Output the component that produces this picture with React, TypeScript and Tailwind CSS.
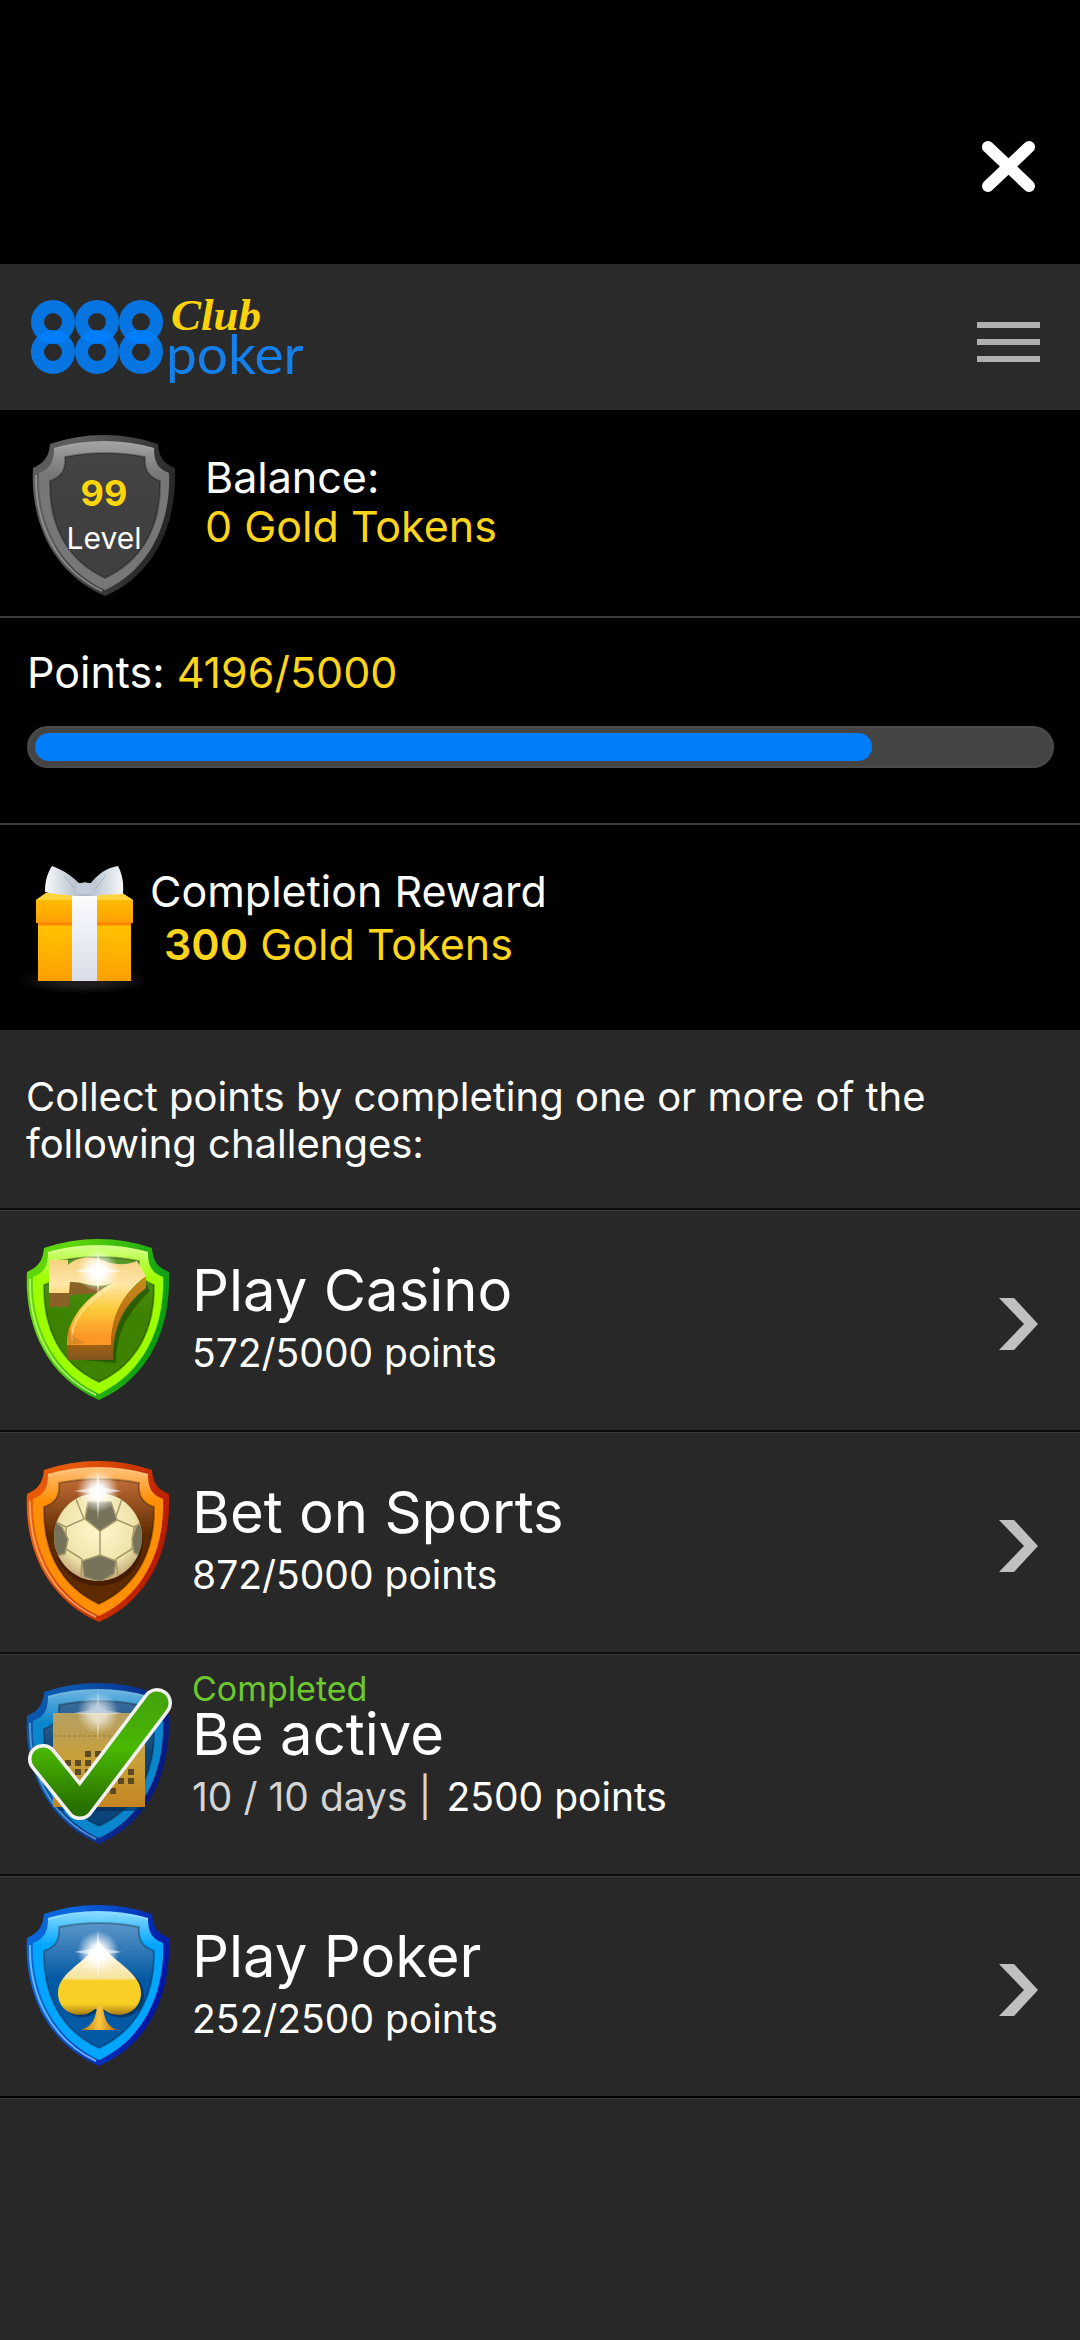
import type { ReactNode } from 'react';

type Tone = { rim: string; rimDark: string; band: string; bandLight: string; face: string; faceDark: string };

const TONES: Record<string, Tone> = {
  gray: { rim: '#5c5c5c', rimDark: '#262626', band: '#777777', bandLight: '#a3a3a3', face: '#454545', faceDark: '#404040' },
  green: { rim: '#5fd60c', rimDark: '#0c9c12', band: '#9dff00', bandLight: '#d4ff86', face: '#5a9a2a', faceDark: '#3d8200' },
  orange: { rim: '#e8590a', rimDark: '#b81c00', band: '#ff8f06', bandLight: '#ffc27a', face: '#c06d36', faceDark: '#5f2a00' },
  navy: { rim: '#0c57ad', rimDark: '#081a80', band: '#0b86cc', bandLight: '#6db4e0', face: '#3a6c9c', faceDark: '#0a4478' },
  blue: { rim: '#0a66dc', rimDark: '#0216a4', band: '#03a6ff', bandLight: '#8adbff', face: '#5a96c8', faceDark: '#0459a4' },
};

function Shield({ tone, children }: { tone: string; children?: ReactNode }) {
  const t = TONES[tone];
  return (
    <svg viewBox="0 0 144 161" className="block h-[161px] w-36 shrink-0 overflow-visible" aria-hidden="true">
      <defs>
        <linearGradient id={`${tone}-rim`} x1="0" y1="0" x2="1" y2="0.35">
          <stop offset="0.3" stopColor={t.rim} />
          <stop offset="1" stopColor={t.rimDark} />
        </linearGradient>
        <linearGradient id={`${tone}-band`} x1="0" y1="0" x2="0" y2="1">
          <stop offset="0" stopColor={t.bandLight} />
          <stop offset="0.22" stopColor={t.band} />
          <stop offset="1" stopColor={t.band} />
        </linearGradient>
        <linearGradient id={`${tone}-face`} x1="0" y1="0" x2="0" y2="1">
          <stop offset="0" stopColor={t.face} />
          <stop offset="0.45" stopColor={t.faceDark} />
          <stop offset="1" stopColor={t.faceDark} />
        </linearGradient>
      </defs>
      <path
        d="M18 9Q44 0 72 0Q100 0 126 9C127 22 131 28 143 33C145 82 128 137 73 161C18 137 -2 82 1 33C12 28 17 22 18 9Z"
        fill={`url(#${tone}-rim)`}
      />
      <path
        d="M22 14Q46 7 72 7Q98 7 122 14C122 27 126 34 137 38C139 82 122 132 73 155C24 132 5 82 7 38C18 34 22 27 22 14Z"
        fill={`url(#${tone}-band)`}
      />
      <path d="M22 14Q46 7 72 7Q98 7 122 14" fill="none" stroke={t.bandLight} strokeWidth="2" />
      <path d="M4 40C3 86 22 133 70 156" fill="none" stroke={t.bandLight} strokeWidth="2" opacity="0.7" />
      <path
        d="M33 22Q52 18 73 18Q94 18 113 22C112 36 117 42 128 46C129 86 114 124 73 143C32 124 17 86 18 46C29 42 34 36 33 22Z"
        fill={`url(#${tone}-face)`}
        stroke="#000"
        strokeOpacity="0.28"
        strokeWidth="2"
      />
      {children}
    </svg>
  );
}

function Sparkle({ id, y, opacity = 1 }: { id: string; y: number; opacity?: number }) {
  return (
    <g opacity={opacity}>
      <radialGradient id={id}>
        <stop offset="0" stopColor="#fff" />
        <stop offset="0.35" stopColor="#fff" stopOpacity="0.9" />
        <stop offset="1" stopColor="#fff" stopOpacity="0" />
      </radialGradient>
      <circle cx="72" cy={y} r="21" fill={`url(#${id})`} />
      <path d={`M72 ${y - 22}L74 ${y - 4}L96 ${y}L74 ${y + 3}L72 ${y + 28}L70 ${y + 3}L48 ${y}L70 ${y - 4}Z`} fill="#fff" opacity="0.6" />
    </g>
  );
}

function CasinoIcon() {
  return (
    <Shield tone="green">
      <defs>
        <linearGradient id="seven" x1="0" y1="0" x2="0" y2="1">
          <stop offset="0" stopColor="#f6d07c" />
          <stop offset="0.3" stopColor="#ffe6a8" />
          <stop offset="0.6" stopColor="#fbca38" />
          <stop offset="0.9" stopColor="#fd9726" />
        </linearGradient>
        <linearGradient id="seven-side" x1="0" y1="0" x2="0" y2="1">
          <stop offset="0" stopColor="#c98a1c" />
          <stop offset="0.7" stopColor="#b5680c" />
          <stop offset="1" stopColor="#80561e" />
        </linearGradient>
      </defs>
      <path d="M46 120L90 124C91 92 100 76 124 52L118 40L60 90Z" fill="#1d4600" opacity="0.6" />
      <path
        d="M23 54V67L43 68V57C56 55 64 58 76 52L92 43L120 37V49C98 66 87 86 87 121H41V106Z"
        fill="#1f5200"
        opacity="0"
      />
      <path d="M23 54H43V68H23ZM43 43C56 42 66 50 78 47L72 54C62 56 54 54 43 57Z" fill="#8a6228" />
      <path d="M120 37V49C98 66 87 86 87 121H41V106H80L84 70Z" fill="url(#seven-side)" />
      <path
        d="M23 21H42V26C50 18 62 17 74 20C86 26 98 27 111 22L120 37C98 54 85 74 85 106H41C41 86 52 62 88 43C72 52 58 42 44 43L43 54H23Z"
        fill="url(#seven)"
      />
      <path d="M46 102C44 84 58 62 92 44" fill="none" stroke="#fff0b0" strokeWidth="2" opacity="0.6" />
      <path d="M42 106V86C45 96 50 101 60 104" fill="#c07a1c" opacity="0.5" />
      <Sparkle id="casino-glow" y={32} />
    </Shield>
  );
}

function SportsIcon() {
  return (
    <Shield tone="orange">
      <defs>
        <radialGradient id="ball" cx="0.5" cy="0.4" r="0.6">
          <stop offset="0" stopColor="#fff8cc" />
          <stop offset="0.7" stopColor="#efe4ac" />
          <stop offset="1" stopColor="#c4a878" />
        </radialGradient>
        <clipPath id="ball-clip">
          <circle cx="72" cy="76" r="44" />
        </clipPath>
      </defs>
      <ellipse cx="73" cy="83" rx="44" ry="42" fill="#351500" opacity="0.6" />
      <circle cx="72" cy="76" r="44" fill="url(#ball)" />
      <g clipPath="url(#ball-clip)" stroke="#a59a6c" strokeWidth="1.5">
        <path
          d="M58 58L40 66L40 88L56 98M89 58L108 66L106 88L90 98M74 69V95M58 58L50 38M89 58L96 38M40 66L28 60M108 66L118 60M40 88L33 92M106 88L112 92M56 98L55 116M90 98L92 116"
          fill="none"
        />
        <path d="M62 41H85L91 59L74 70L59 58Z" fill="#77735a" />
        <path d="M56 100L74 94L90 100L88 113L74 121L58 116Z" fill="#77735a" />
        <path d="M27 58L36 66L42 78L39 93L31 95L24 78Z" fill="#77735a" />
        <path d="M119 58L110 66L106 78L108 92L115 95L120 78Z" fill="#77735a" />
      </g>
      <Sparkle id="sports-glow" y={30} />
    </Shield>
  );
}

const DAYS = [
  [59, 68], [69, 68], [79, 68],
  [39, 77], [49, 77], [59, 77], [69, 77], [79, 77], [89, 77],
  [49, 86], [59, 86], [69, 86], [79, 86], [89, 86], [102, 86],
  [69, 95], [79, 95], [92, 95], [102, 95],
  [76, 105], [84, 105],
];

function ActiveIcon() {
  return (
    <Shield tone="navy">
      <defs>
        <linearGradient id="calendar" x1="0" y1="0" x2="0" y2="1">
          <stop offset="0" stopColor="#b59f63" />
          <stop offset="0.5" stopColor="#c9a038" />
          <stop offset="1" stopColor="#c58420" />
        </linearGradient>
        <linearGradient id="tick" x1="0" y1="0" x2="0" y2="1">
          <stop offset="0" stopColor="#43a50a" />
          <stop offset="0.45" stopColor="#49b800" />
          <stop offset="1" stopColor="#2a7200" />
        </linearGradient>
      </defs>
      <path d="M28 122H120V128H34Z" fill="#062850" opacity="0.6" />
      <rect x="27" y="30" width="92" height="94" fill="url(#calendar)" />
      <path d="M27 53H119" stroke="#8a7844" strokeDasharray="3 2" />
      {DAYS.map(([x, y]) => (
        <rect key={`${x}-${y}`} x={x} y={y} width="6" height="6" fill="#5c4a20" />
      ))}
      <Sparkle id="active-glow" y={30} opacity={0.7} />
      <path d="M17 76L54 122L131 20" fill="none" stroke="#f2f2f2" strokeWidth="30" strokeLinecap="round" strokeLinejoin="round" />
      <path d="M17 76L54 122L131 20" fill="none" stroke="url(#tick)" strokeWidth="23" strokeLinecap="round" strokeLinejoin="round" />
    </Shield>
  );
}

function PokerIcon() {
  return (
    <Shield tone="blue">
      <defs>
        <linearGradient id="spade" x1="0" y1="0" x2="0" y2="1">
          <stop offset="0" stopColor="#fff" />
          <stop offset="0.5" stopColor="#f6e4a0" />
          <stop offset="0.54" stopColor="#f9cf26" />
          <stop offset="0.85" stopColor="#f9cf26" />
          <stop offset="1" stopColor="#a97a10" />
        </linearGradient>
        <linearGradient id="spade-stem" x1="0" y1="0" x2="1" y2="0">
          <stop offset="0" stopColor="#b0700c" />
          <stop offset="0.5" stopColor="#fbc640" />
          <stop offset="1" stopColor="#a8620a" />
        </linearGradient>
      </defs>
      <path d="M74 41C86 58 118 68 118 90C118 112 92 119 78 106H71C58 119 34 111 34 90C34 68 62 60 74 41Z" fill="#03284e" opacity="0.6" />
      <path d="M73 36C84 56 115 66 115 88C115 109 90 116 77 104H69C56 116 32 109 32 88C32 67 62 57 73 36Z" fill="url(#spade)" />
      <path d="M71 101H77C78 115 82 122 92 125H55C66 121 70 114 71 101Z" fill="url(#spade-stem)" />
      <Sparkle id="poker-glow" y={47} />
    </Shield>
  );
}

function GiftIcon() {
  return (
    <svg viewBox="0 0 126 128" className="block h-32 w-[126px] shrink-0" aria-hidden="true">
      <defs>
        <linearGradient id="gift-box" x1="0" y1="0" x2="0" y2="1">
          <stop offset="0" stopColor="#ffc400" />
          <stop offset="1" stopColor="#ff9f05" />
        </linearGradient>
        <linearGradient id="gift-ribbon" x1="0" y1="0" x2="0" y2="1">
          <stop offset="0" stopColor="#fbfdfe" />
          <stop offset="1" stopColor="#d9dde8" />
        </linearGradient>
        <linearGradient id="gift-bow" x1="0" y1="0" x2="1" y2="0">
          <stop offset="0" stopColor="#f6f9fa" />
          <stop offset="0.5" stopColor="#a9b5c4" />
          <stop offset="1" stopColor="#f6f9fa" />
        </linearGradient>
        <radialGradient id="gift-shadow">
          <stop offset="0.4" stopColor="#201c1c" />
          <stop offset="1" stopColor="#000" />
        </radialGradient>
      </defs>
      <ellipse cx="70" cy="114" rx="66" ry="14" fill="url(#gift-shadow)" />
      <rect x="24" y="56" width="93" height="59" fill="url(#gift-box)" />
      <path d="M32 27H108L119 34V57H22V34Z" fill="url(#gift-box)" />
      <path d="M32 27H108L119 34H22Z" fill="#ffd43c" />
      <path d="M24 58H117" stroke="#ff8400" strokeWidth="3" />
      <path d="M58 28H83V115H58Z" fill="url(#gift-ribbon)" />
      <path d="M38 0C50 4 60 12 66 18Q71 15 76 18C84 8 92 2 104 0C108 8 110 16 109 28C98 29 88 28 80 30H61C51 28 42 29 31 26C31 14 34 6 38 0Z" fill="url(#gift-bow)" />
      <path d="M62 18Q71 15 80 18L79 28H62Z" fill="#c2ccd8" />
      <path d="M50 10L60 22M92 9L82 22" stroke="#8e9cac" strokeWidth="1" opacity="0.6" />
    </svg>
  );
}

function Logo() {
  return (
    <svg viewBox="0 0 280 104" className="block h-[104px] w-[280px]" role="img" aria-label="888 Club poker">
      <g fill="none" stroke="#0080ff" strokeWidth="13" strokeOpacity="0.86">
        {[23, 67, 111].map((x) => (
          <g key={x}>
            <circle cx={x} cy="37" r="15.5" />
            <circle cx={x} cy="67" r="15.5" />
          </g>
        ))}
      </g>
      <text x="141" y="45" fill="#fcd30a" fontFamily='"Liberation Serif", serif' fontStyle="italic" fontWeight="700" fontSize="45">Club</text>
      <text x="136" y="89" fill="#1480ec" fontFamily="Lato, sans-serif" fontWeight="400" fontSize="55">poker</text>
    </svg>
  );
}

type Challenge = { title: string; icon: ReactNode; progress: ReactNode; done?: boolean };

const CHALLENGES: Challenge[] = [
  { title: 'Play Casino', icon: <CasinoIcon />, progress: '572/5000 points' },
  { title: 'Bet on Sports', icon: <SportsIcon />, progress: '872/5000 points' },
  {
    title: 'Be active',
    icon: <ActiveIcon />,
    progress: (
      <>
        <span className="mr-1 text-[#d4d4d4]">10 / 10 days |</span> 2500 points
      </>
    ),
    done: true,
  },
  { title: 'Play Poker', icon: <PokerIcon />, progress: '252/2500 points' },
];

function ChallengeRow({ title, icon, progress, done }: Challenge) {
  const body = (
    <>
      <span className="mt-[29px]">{icon}</span>
      <span className="flex flex-1 flex-col">
        <span className="mt-[17px] h-9 text-[34px] leading-9 text-[#6cc82e]">{done && 'Completed'}</span>
        <span className="text-[58px] leading-[54px]">{title}</span>
        <span className="mt-3 text-[39px] leading-[48px]">{progress}</span>
      </span>
      {!done && (
        <svg viewBox="0 0 39 52" className="mt-[88px] h-[52px] w-[39px]" aria-hidden="true">
          <path d="M0 0H15L39 26L15 52H0L25 26Z" fill="#c0c0c0" />
        </svg>
      )}
    </>
  );
  const row = 'flex h-[222px] w-full items-start gap-[22px] border-t-2 border-[#0c0c0c] pl-[26px] pr-[42px] shadow-[inset_0_1px_0_#3a3a3a]';

  return <li>{done ? <div className={row}>{body}</div> : <a href="#challenge" className={row}>{body}</a>}</li>;
}

export default function App() {
  return (
    <div className="flex min-h-screen flex-col bg-[#282828] font-[Inter,sans-serif] text-white">
      <div className="flex h-[264px] justify-end bg-black pr-[45px] pt-[141px]">
        <button type="button" aria-label="Close" className="h-[51px] w-[53px]">
          <svg viewBox="0 0 53 51" className="block h-[51px] w-[53px]" aria-hidden="true">
            <path d="M6 6L47 45M47 6L6 45" stroke="#fff" strokeWidth="12" strokeLinecap="round" />
          </svg>
        </button>
      </div>

      <header className="flex h-[146px] items-center justify-between bg-[#2a2a2a] pl-[30px] pr-10">
        <Logo />
        <button type="button" aria-label="Menu" className="flex flex-col gap-[11px] pt-2.5">
          <span className="h-1.5 w-[63px] bg-[#b0b0b0]" />
          <span className="h-1.5 w-[63px] bg-[#b0b0b0]" />
          <span className="h-1.5 w-[63px] bg-[#b0b0b0]" />
        </button>
      </header>

      <section className="flex h-52 items-start border-b-2 border-[#3c3c3c] bg-black pl-8">
        <div className="relative mt-[25px]">
          <Shield tone="gray" />
          <div className="absolute inset-x-0 top-9 flex flex-col items-center">
            <span className="text-[36px] font-bold leading-[44px] text-[#ffd60a]">99</span>
            <span className="text-[30px] leading-[46px]">Level</span>
          </div>
        </div>
        <p className="ml-[29px] mt-[43px] text-[43px] leading-[49px]">
          Balance:
          <span className="block text-[#fcd41c]">0 Gold Tokens</span>
        </p>
      </section>

      <section className="border-b-2 border-[#3c3c3c] bg-black pb-[55px] pl-[27px] pr-[26px] pt-[30px]">
        <p className="text-[43px] leading-[49px]">
          Points: <span className="text-[#fcd41c]">4196/5000</span>
        </p>
        <div className="mt-[29px] h-[42px] rounded-full border-2 border-[#4b4b4b] bg-[#444] px-1.5 py-[5px]">
          <div className="h-7 rounded-full bg-[#007df8]" style={{ width: `${(4140 / 5000) * 100}%` }} />
        </div>
      </section>

      <section className="flex h-[205px] items-start bg-black pl-3.5">
        <div className="mt-[41px]">
          <GiftIcon />
        </div>
        <p className="ml-2.5 mt-10 text-[43px] leading-[53px]">
          Completion Reward
          <span className="block pl-3.5 text-[#fcd41c]">
            <b className="font-semibold">300</b> Gold Tokens
          </span>
        </p>
      </section>

      <main>
        <p className="px-[26px] pb-[41px] pt-[43px] text-[40px] leading-[47px]">
          Collect points by completing one or more of the following challenges:
        </p>
        <ul className="border-b-2 border-black shadow-[0_1px_0_#3a3a3a]">
          {CHALLENGES.map((c) => (
            <ChallengeRow key={c.title} {...c} />
          ))}
        </ul>
      </main>
    </div>
  );
}
